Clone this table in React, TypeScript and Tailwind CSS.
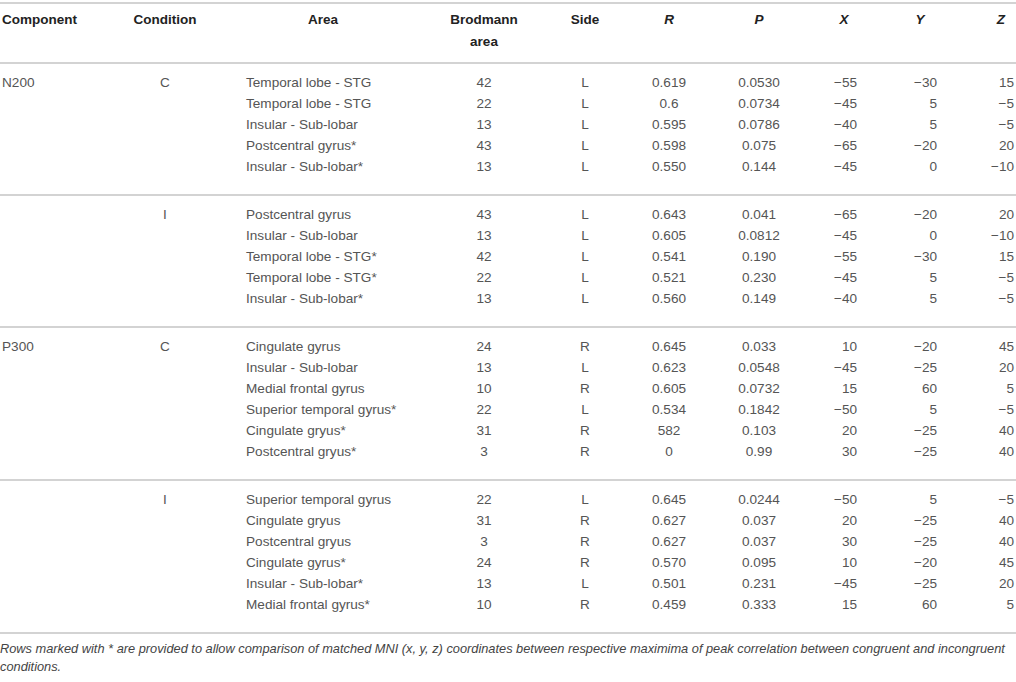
type Row = [string, string, string, string, string, string, string, string];

type Group = { component?: string; condition: string; rows: Row[] };

const groups: Group[] = [
  {
    component: "N200",
    condition: "C",
    rows: [
      ["Temporal lobe - STG", "42", "L", "0.619", "0.0530", "−55", "−30", "15"],
      ["Temporal lobe - STG", "22", "L", "0.6", "0.0734", "−45", "5", "−5"],
      ["Insular - Sub-lobar", "13", "L", "0.595", "0.0786", "−40", "5", "−5"],
      ["Postcentral gyrus*", "43", "L", "0.598", "0.075", "−65", "−20", "20"],
      ["Insular - Sub-lobar*", "13", "L", "0.550", "0.144", "−45", "0", "−10"],
    ],
  },
  {
    condition: "I",
    rows: [
      ["Postcentral gyrus", "43", "L", "0.643", "0.041", "−65", "−20", "20"],
      ["Insular - Sub-lobar", "13", "L", "0.605", "0.0812", "−45", "0", "−10"],
      ["Temporal lobe - STG*", "42", "L", "0.541", "0.190", "−55", "−30", "15"],
      ["Temporal lobe - STG*", "22", "L", "0.521", "0.230", "−45", "5", "−5"],
      ["Insular - Sub-lobar*", "13", "L", "0.560", "0.149", "−40", "5", "−5"],
    ],
  },
  {
    component: "P300",
    condition: "C",
    rows: [
      ["Cingulate gyrus", "24", "R", "0.645", "0.033", "10", "−20", "45"],
      ["Insular - Sub-lobar", "13", "L", "0.623", "0.0548", "−45", "−25", "20"],
      ["Medial frontal gyrus", "10", "R", "0.605", "0.0732", "15", "60", "5"],
      ["Superior temporal gyrus*", "22", "L", "0.534", "0.1842", "−50", "5", "−5"],
      ["Cingulate gryus*", "31", "R", "582", "0.103", "20", "−25", "40"],
      ["Postcentral gryus*", "3", "R", "0", "0.99", "30", "−25", "40"],
    ],
  },
  {
    condition: "I",
    rows: [
      ["Superior temporal gyrus", "22", "L", "0.645", "0.0244", "−50", "5", "−5"],
      ["Cingulate gryus", "31", "R", "0.627", "0.037", "20", "−25", "40"],
      ["Postcentral gryus", "3", "R", "0.627", "0.037", "30", "−25", "40"],
      ["Cingulate gyrus*", "24", "R", "0.570", "0.095", "10", "−20", "45"],
      ["Insular - Sub-lobar*", "13", "L", "0.501", "0.231", "−45", "−25", "20"],
      ["Medial frontal gyrus*", "10", "R", "0.459", "0.333", "15", "60", "5"],
    ],
  },
];

const cols = "grid grid-cols-[112px_106px_210px_112px_90px_78px_102px_68px_84px_54px]";

function Header() {
  return (
    <div className={`${cols} h-[60px] border-b-2 border-[#d3d3d3] pt-[5px] text-[13.5px] font-bold leading-[22px] text-[#222]`}>
      <div className="pl-[2px]">Component</div>
      <div className="text-center">Condition</div>
      <div className="text-center">Area</div>
      <div className="text-center">
        Brodmann
        <br />
        area
      </div>
      <div className="text-center">Side</div>
      <div className="text-center italic">R</div>
      <div className="text-center italic">P</div>
      <div className="text-center italic">X</div>
      <div className="text-center italic">Y</div>
      <div className="text-right italic pr-[11px]">Z</div>
    </div>
  );
}

function GroupRows({ group }: { group: Group }) {
  return (
    <div className="border-b-2 border-[#d3d3d3] pt-[9px] pb-[16px]">
      {group.rows.map((r, i) => (
        <div key={i} className={`${cols} h-[21px] items-center whitespace-nowrap`}>
          <div className="pl-[2px]">{i === 0 ? group.component : ""}</div>
          <div className="text-center">{i === 0 ? group.condition : ""}</div>
          <div className="pl-[28px]">{r[0]}</div>
          <div className="text-center">{r[1]}</div>
          <div className="text-center">{r[2]}</div>
          <div className="text-center">{r[3]}</div>
          <div className="text-center">{r[4]}</div>
          <div className="text-right pr-[21px]">{r[5]}</div>
          <div className="text-right pr-[25px]">{r[6]}</div>
          <div className="text-right pr-[2px]">{r[7]}</div>
        </div>
      ))}
    </div>
  );
}

export default function App() {
  return (
    <div className="w-[1016px] h-[682px] bg-white pt-[2px] font-['Liberation_Sans',Arial,sans-serif] text-[13.6px] text-[#555]">
      <div className="border-t-2 border-[#d3d3d3]">
        <Header />
        {groups.map((g, i) => (
          <GroupRows key={i} group={g} />
        ))}
      </div>
      <p className="pt-[6px] text-[12.8px] italic leading-[18px] text-[#444]">
        Rows marked with * are provided to allow comparison of matched MNI (x, y, z) coordinates between respective maximima of peak correlation between congruent and incongruent conditions.
      </p>
    </div>
  );
}
